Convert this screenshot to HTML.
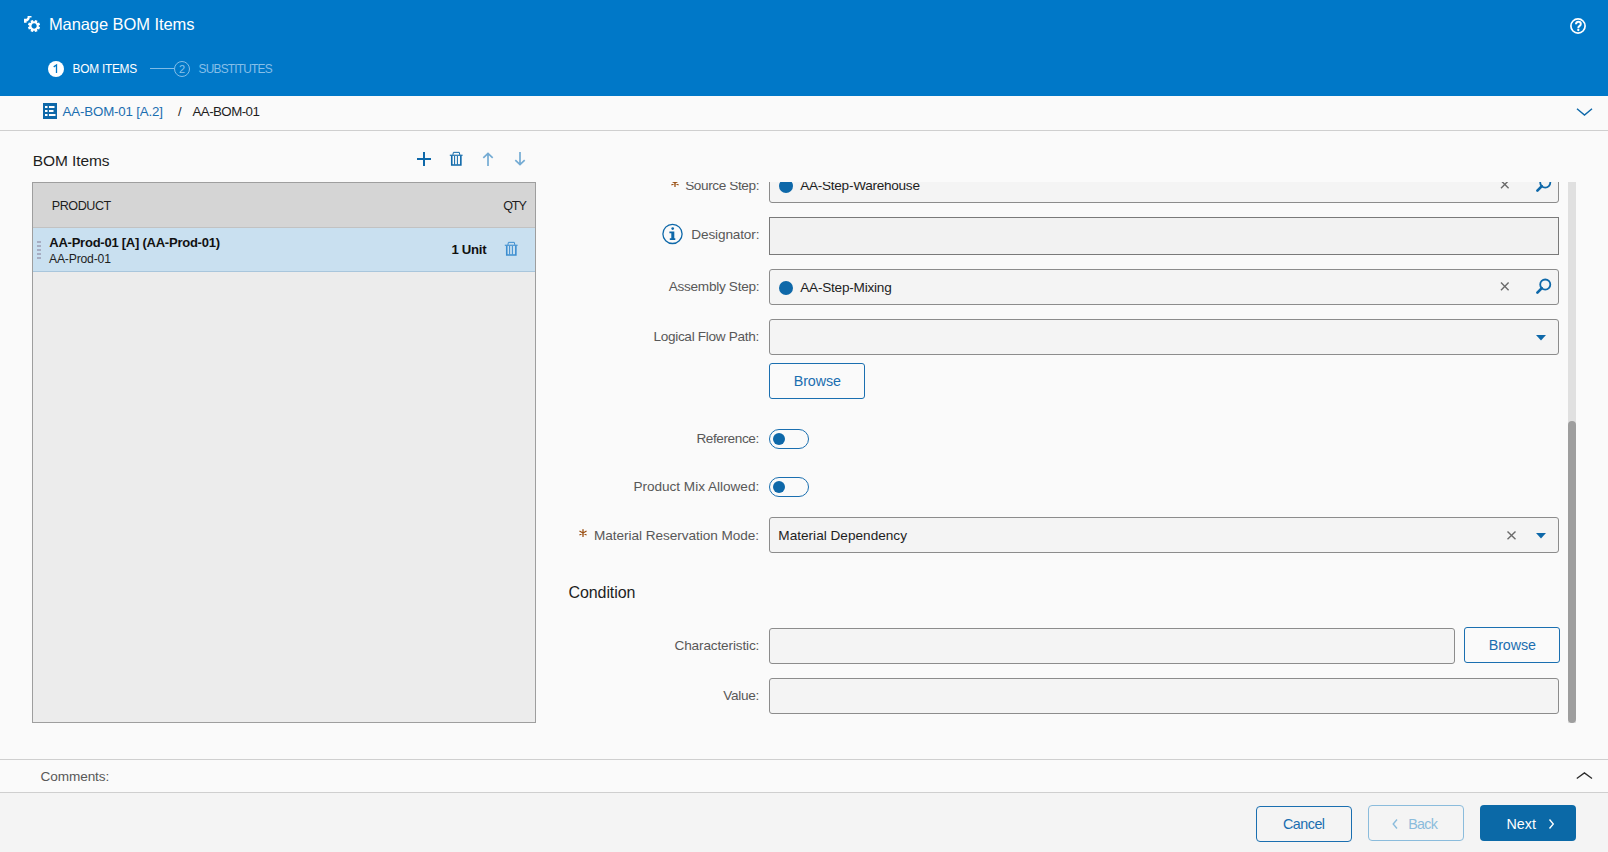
<!DOCTYPE html>
<html><head><meta charset="utf-8"><title>Manage BOM Items</title>
<style>
html,body{margin:0;padding:0;width:1608px;height:852px;overflow:hidden;background:#fafafa;font-family:"Liberation Sans", sans-serif;}
svg text{font-family:"Liberation Sans", sans-serif;}
</style></head><body>
<div style="position:absolute;left:0px;top:0px;width:1608px;height:96px;background:#0078c8"></div>
<div style="position:absolute;left:0px;top:96px;width:1608px;height:35px;background:#fafafa"></div>
<div style="position:absolute;left:0px;top:130px;width:1608px;height:1px;background:#cfcfcf"></div>
<div style="position:absolute;left:0px;top:131px;width:1608px;height:628px;background:#fafafa"></div>
<div style="position:absolute;left:0px;top:759px;width:1608px;height:1px;background:#cfcfcf"></div>
<div style="position:absolute;left:0px;top:760px;width:1608px;height:32px;background:#fafafa"></div>
<div style="position:absolute;left:0px;top:792px;width:1608px;height:1px;background:#cfcfcf"></div>
<div style="position:absolute;left:0px;top:793px;width:1608px;height:59px;background:#f4f4f4"></div>
<svg style="position:absolute;left:22px;top:14px;" width="20" height="20" viewBox="0 0 20 20"><g fill="#fff"><path d="M16.59 12.24 L18.09 13.19 L17.14 15.46 L15.42 15.08 L15.08 15.42 L15.46 17.14 L13.19 18.09 L12.24 16.59 L11.76 16.59 L10.81 18.09 L8.54 17.14 L8.92 15.42 L8.58 15.08 L6.86 15.46 L5.91 13.19 L7.41 12.24 L7.41 11.76 L5.91 10.81 L6.86 8.54 L8.58 8.92 L8.92 8.58 L8.54 6.86 L10.81 5.91 L11.76 7.41 L12.24 7.41 L13.19 5.91 L15.46 6.86 L15.08 8.58 L15.42 8.92 L17.14 8.54 L18.09 10.81 L16.59 11.76Z M12.1 9.35a2.65 2.65 0 1 0 0.01 0z" fill-rule="evenodd"/>
<path d="M2 4.8L4.6 4.8L5.6 3.4L5.6 2L9.5 2L9.5 3.6L7.6 3.6L7.6 5L5.8 7.3L4.6 7.3L4.6 8.7L2 8.7Z"/></g></svg>
<div style="position:absolute;left:48.9px;top:13.00px;font-size:16.5px;line-height:23px;color:#fff;font-weight:400;white-space:nowrap;letter-spacing:-0.08px;">Manage BOM Items</div>
<svg style="position:absolute;left:1569px;top:17px;" width="18" height="18" viewBox="0 0 18 18"><circle cx="9" cy="9" r="7.1" fill="none" stroke="#fff" stroke-width="1.7"/><path d="M7 7.3C7 5.6 8 4.8 9.4 4.8C10.9 4.8 11.8 5.7 11.8 7C11.8 8.3 10.9 8.9 10.1 9.4C9.5 9.8 9.3 10.3 9.3 11.2" fill="none" stroke="#fff" stroke-width="2"/><circle cx="9.3" cy="13" r="1.15" fill="#fff"/></svg>
<svg style="position:absolute;left:48px;top:61px;" width="16" height="16" viewBox="0 0 16 16"><circle cx="8" cy="8" r="8" fill="#fff"/><path d="M5.7 5.9L8.5 3.9V12" fill="none" stroke="#0078c8" stroke-width="1.3"/></svg>
<div style="position:absolute;left:72.6px;top:61.00px;font-size:11.9px;line-height:17px;color:#fff;font-weight:400;white-space:nowrap;letter-spacing:-0.275px;">BOM ITEMS</div>
<div style="position:absolute;left:150px;top:68px;width:24px;height:1px;background:#7fbbe6"></div>
<svg style="position:absolute;left:174px;top:61px;" width="16" height="16" viewBox="0 0 16 16"><circle cx="8" cy="8" r="7.5" fill="none" stroke="#84bee8" stroke-width="1"/><text x="8" y="12" text-anchor="middle" font-family="Liberation Sans" font-size="11" fill="#8ac2ea">2</text></svg>
<div style="position:absolute;left:198.6px;top:61.00px;font-size:11.9px;line-height:17px;color:#86bfe8;font-weight:400;white-space:nowrap;letter-spacing:-0.79px;">SUBSTITUTES</div>
<svg style="position:absolute;left:43px;top:103px;" width="14" height="16" viewBox="0 0 14 16"><rect width="14" height="16" fill="#0e68a9"/><g fill="#fff"><rect x="2" y="3" width="2.5" height="2"/><rect x="6" y="3" width="5.5" height="2"/><rect x="2" y="7" width="2.5" height="2"/><rect x="6" y="7" width="4.5" height="2"/><rect x="2" y="11" width="2.5" height="2"/><rect x="6" y="11" width="6.5" height="2"/></g></svg>
<div style="position:absolute;left:62.6px;top:102.00px;font-size:13.3px;line-height:19px;color:#1a6eb0;font-weight:400;white-space:nowrap;letter-spacing:-0.168px;">AA-BOM-01 [A.2]</div>
<div style="position:absolute;left:178px;top:103.00px;font-size:13px;line-height:18px;color:#1e1e1e;font-weight:400;white-space:nowrap;letter-spacing:0px;">/</div>
<div style="position:absolute;left:192.5px;top:102.00px;font-size:13.3px;line-height:19px;color:#1e1e1e;font-weight:400;white-space:nowrap;letter-spacing:-0.55px;">AA-BOM-01</div>
<svg style="position:absolute;left:1576px;top:106px;" width="17" height="11" viewBox="0 0 17 11"><path d="M1 2.8L8.5 9L16 2.8" fill="none" stroke="#0e68a9" stroke-width="1.45"/></svg>
<div style="position:absolute;left:32.8px;top:150.00px;font-size:15.5px;line-height:22px;color:#1e1e1e;font-weight:400;white-space:nowrap;letter-spacing:-0.088px;">BOM Items</div>
<svg style="position:absolute;left:416px;top:151px;" width="16" height="16" viewBox="0 0 16 16"><path d="M8 1v14M1 8h14" stroke="#0e68a9" stroke-width="2"/></svg>
<svg style="position:absolute;left:449px;top:151px;" width="14" height="16" viewBox="0 0 14 16"><g fill="none" stroke="#0e68a9"><path d="M0.8 4.25h12.8" stroke-width="1.1"/><path d="M3.9 3.9L4.4 1.35H10.3L10.8 3.9" stroke-width="1"/><path d="M2.75 4.6V14.05H11.85V4.6" stroke-width="1.6"/><path d="M5.6 5v8.5M8.4 5v8.5" stroke-width="1"/></g></svg>
<svg style="position:absolute;left:481px;top:151px;" width="14" height="16" viewBox="0 0 14 16"><g fill="none" stroke="#74abd3" stroke-width="1.7"><path d="M7 2.4v12.6M2.3 6.8L7 2.4l4.7 4.4"/></g></svg>
<svg style="position:absolute;left:513px;top:151px;" width="14" height="16" viewBox="0 0 14 16"><g fill="none" stroke="#74abd3" stroke-width="1.7"><path d="M7 1v12.6M2.3 9.2L7 13.6l4.7-4.4"/></g></svg>
<div style="position:absolute;left:32px;top:182px;width:504px;height:541px;box-sizing:border-box;border:1px solid #9e9e9e;background:#ececec"></div>
<div style="position:absolute;left:33px;top:183px;width:502px;height:44px;background:#d5d5d5"></div>
<div style="position:absolute;left:33px;top:227px;width:502px;height:1px;background:#c2c2c2"></div>
<div style="position:absolute;left:33px;top:228px;width:502px;height:43px;background:#c9e0f0"></div>
<div style="position:absolute;left:33px;top:271px;width:502px;height:1px;background:#a9c6dc"></div>
<div style="position:absolute;left:51.8px;top:197.00px;font-size:12.6px;line-height:18px;color:#1e1e1e;font-weight:400;white-space:nowrap;letter-spacing:-0.467px;">PRODUCT</div>
<div style="position:absolute;left:503.2px;top:197.00px;font-size:12.6px;line-height:18px;color:#1e1e1e;font-weight:400;white-space:nowrap;letter-spacing:-1.15px;">QTY</div>
<div style="position:absolute;left:37px;top:241px;width:4px;height:2px;background:#a7adc2"></div>
<div style="position:absolute;left:37px;top:245px;width:4px;height:2px;background:#a7adc2"></div>
<div style="position:absolute;left:37px;top:249px;width:4px;height:2px;background:#a7adc2"></div>
<div style="position:absolute;left:37px;top:253px;width:4px;height:2px;background:#a7adc2"></div>
<div style="position:absolute;left:37px;top:257px;width:4px;height:2px;background:#a7adc2"></div>
<div style="position:absolute;left:49.3px;top:234.00px;font-size:13px;line-height:18px;color:#111;font-weight:700;white-space:nowrap;letter-spacing:-0.24px;">AA-Prod-01 [A] (AA-Prod-01)</div>
<div style="position:absolute;left:49.0px;top:251.00px;font-size:12.2px;line-height:17px;color:#1e1e1e;font-weight:400;white-space:nowrap;letter-spacing:-0.194px;">AA-Prod-01</div>
<div style="position:absolute;left:451.4px;top:241.00px;font-size:13.2px;line-height:18px;color:#111;font-weight:700;white-space:nowrap;letter-spacing:-0.29px;">1 Unit</div>
<svg style="position:absolute;left:504px;top:241px;" width="14" height="16" viewBox="0 0 14 16"><g fill="none" stroke="#3d8ed0"><path d="M0.8 4.25h12.8" stroke-width="1.1"/><path d="M3.9 3.9L4.4 1.35H10.3L10.8 3.9" stroke-width="1"/><path d="M2.75 4.6V14.05H11.85V4.6" stroke-width="1.6"/><path d="M5.6 5v8.5M8.4 5v8.5" stroke-width="1"/></g></svg>
<div style="position:absolute;left:540px;top:182px;width:1030px;height:541px;overflow:hidden">
<div style="position:absolute;left:-540px;top:-182px;width:1608px;height:852px">
<div style="position:absolute;left:769px;top:167px;width:790px;height:36px;box-sizing:border-box;border:1px solid #8c8c8c;border-radius:3px;background:#f4f4f4"></div>
<div style="position:absolute;left:779px;top:179px;width:14px;height:14px;border-radius:50%;background:#0e68a9"></div>
<div style="position:absolute;left:800.2px;top:176.00px;font-size:13.6px;line-height:19px;color:#1e1e1e;font-weight:400;white-space:nowrap;letter-spacing:-0.275px;">AA-Step-Warehouse</div>
<svg style="position:absolute;left:1499px;top:179px;" width="12" height="12" viewBox="0 0 12 12"><path d="M2.00 1.60L9.60 9.20M9.60 1.60L2.00 9.20" stroke="#6b6b6b" stroke-width="1.4"/></svg>
<svg style="position:absolute;left:1535px;top:176px;" width="17" height="17" viewBox="0 0 17 17"><g fill="none" stroke="#0e68a9"><circle cx="10.25" cy="6.55" r="5.05" stroke-width="1.8"/><path d="M6.8 10.1L2.4 14.6" stroke-width="2.7" stroke-linecap="round"/></g></svg>
<div style="position:absolute;left:685.2px;top:176.00px;font-size:13.6px;line-height:19px;color:#585858;font-weight:400;white-space:nowrap;letter-spacing:-0.395px;">Source Step:</div>
<svg style="position:absolute;left:669.9px;top:178.3px;" width="10" height="10" viewBox="0 0 10 10"><g stroke="#9a4f12" stroke-width="1.3" stroke-linecap="round"><path d="M5 1.6v6.8M1.9 3.3l6.2 3.4M1.9 6.7l6.2-3.4"/></g></svg>
<div style="position:absolute;left:662px;top:223px;width:21px;height:21px;"></div>
<svg style="position:absolute;left:661px;top:222px;" width="23" height="23" viewBox="0 0 23 23"><circle cx="11.5" cy="11.9" r="9.6" fill="none" stroke="#0e68a9" stroke-width="1.3"/><circle cx="11.7" cy="6.6" r="1.35" fill="#0e68a9"/><path d="M8.4 9.6H13.3V16.2H14.3V17.9H8.8V16.2H10.3V11.3H8.4Z" fill="#0e68a9"/></svg>
<div style="position:absolute;left:691.3px;top:225.00px;font-size:13.6px;line-height:19px;color:#585858;font-weight:400;white-space:nowrap;letter-spacing:-0.135px;">Designator:</div>
<div style="position:absolute;left:769px;top:217px;width:790px;height:38px;box-sizing:border-box;border:1px solid #7a7a7a;border-radius:0px;background:#f2f2f2"></div>
<div style="position:absolute;left:668.8px;top:277.00px;font-size:13.6px;line-height:19px;color:#585858;font-weight:400;white-space:nowrap;letter-spacing:-0.292px;">Assembly Step:</div>
<div style="position:absolute;left:769px;top:269px;width:790px;height:36px;box-sizing:border-box;border:1px solid #8c8c8c;border-radius:3px;background:#f4f4f4"></div>
<div style="position:absolute;left:779px;top:281px;width:14px;height:14px;border-radius:50%;background:#0e68a9"></div>
<div style="position:absolute;left:800.2px;top:278.00px;font-size:13.6px;line-height:19px;color:#1e1e1e;font-weight:400;white-space:nowrap;letter-spacing:-0.223px;">AA-Step-Mixing</div>
<svg style="position:absolute;left:1499px;top:281px;" width="12" height="12" viewBox="0 0 12 12"><path d="M2.00 1.60L9.60 9.20M9.60 1.60L2.00 9.20" stroke="#6b6b6b" stroke-width="1.4"/></svg>
<svg style="position:absolute;left:1535px;top:277.5px;" width="17" height="17" viewBox="0 0 17 17"><g fill="none" stroke="#0e68a9"><circle cx="10.25" cy="6.55" r="5.05" stroke-width="1.8"/><path d="M6.8 10.1L2.4 14.6" stroke-width="2.7" stroke-linecap="round"/></g></svg>
<div style="position:absolute;left:653.4px;top:327.00px;font-size:13.6px;line-height:19px;color:#585858;font-weight:400;white-space:nowrap;letter-spacing:-0.303px;">Logical Flow Path:</div>
<div style="position:absolute;left:769px;top:319px;width:790px;height:36px;box-sizing:border-box;border:1px solid #8c8c8c;border-radius:3px;background:#f4f4f4"></div>
<svg style="position:absolute;left:1536px;top:335px;" width="10" height="6" viewBox="0 0 10 6"><path d="M0 0h10L5 5.5z" fill="#0e68a9"/></svg>
<div style="position:absolute;left:769px;top:363px;width:96px;height:36px;box-sizing:border-box;border:1px solid #1a6fb0;border-radius:3px;background:#fafafa"></div>
<div style="position:absolute;left:793.7px;top:371.00px;font-size:14.3px;line-height:20px;color:#1a6eb0;font-weight:400;white-space:nowrap;letter-spacing:-0.08px;">Browse</div>
<div style="position:absolute;left:696.4px;top:429.00px;font-size:13.6px;line-height:19px;color:#585858;font-weight:400;white-space:nowrap;letter-spacing:-0.406px;">Reference:</div>
<div style="position:absolute;left:769px;top:429px;width:40px;height:20px;box-sizing:border-box;border:1.3px solid #1a6fb0;border-radius:10px;background:#fafafa"></div>
<div style="position:absolute;left:773px;top:433px;width:12px;height:12px;border-radius:50%;background:#0e68a9"></div>
<div style="position:absolute;left:633.4px;top:477.00px;font-size:13.6px;line-height:19px;color:#585858;font-weight:400;white-space:nowrap;letter-spacing:-0.018px;">Product Mix Allowed:</div>
<div style="position:absolute;left:769px;top:477px;width:40px;height:20px;box-sizing:border-box;border:1.3px solid #1a6fb0;border-radius:10px;background:#fafafa"></div>
<div style="position:absolute;left:773px;top:481px;width:12px;height:12px;border-radius:50%;background:#0e68a9"></div>
<div style="position:absolute;left:769px;top:517px;width:790px;height:36px;box-sizing:border-box;border:1px solid #8c8c8c;border-radius:3px;background:#f4f4f4"></div>
<div style="position:absolute;left:594.0px;top:526.00px;font-size:13.6px;line-height:19px;color:#585858;font-weight:400;white-space:nowrap;letter-spacing:-0.044px;">Material Reservation Mode:</div>
<svg style="position:absolute;left:578.4px;top:528.2px;" width="10" height="10" viewBox="0 0 10 10"><g stroke="#9a4f12" stroke-width="1.3" stroke-linecap="round"><path d="M5 1.6v6.8M1.9 3.3l6.2 3.4M1.9 6.7l6.2-3.4"/></g></svg>
<div style="position:absolute;left:778.3px;top:526.00px;font-size:13.6px;line-height:19px;color:#1e1e1e;font-weight:400;white-space:nowrap;letter-spacing:0.011px;">Material Dependency</div>
<svg style="position:absolute;left:1506px;top:529px;" width="12" height="12" viewBox="0 0 12 12"><path d="M1.50 2.40L9.50 10.30M9.50 2.40L1.50 10.30" stroke="#6b6b6b" stroke-width="1.4"/></svg>
<svg style="position:absolute;left:1536px;top:533px;" width="10" height="6" viewBox="0 0 10 6"><path d="M0 0h10L5 5.5z" fill="#0e68a9"/></svg>
<div style="position:absolute;left:568.5px;top:582.00px;font-size:16px;line-height:22px;color:#1e1e1e;font-weight:400;white-space:nowrap;letter-spacing:-0.088px;">Condition</div>
<div style="position:absolute;left:674.5px;top:636.00px;font-size:13.6px;line-height:19px;color:#585858;font-weight:400;white-space:nowrap;letter-spacing:-0.143px;">Characteristic:</div>
<div style="position:absolute;left:769px;top:628px;width:686px;height:36px;box-sizing:border-box;border:1px solid #8c8c8c;border-radius:3px;background:#f4f4f4"></div>
<div style="position:absolute;left:1464px;top:627px;width:96px;height:36px;box-sizing:border-box;border:1px solid #1a6fb0;border-radius:3px;background:#fafafa"></div>
<div style="position:absolute;left:1488.7px;top:635.00px;font-size:14.3px;line-height:20px;color:#1a6eb0;font-weight:400;white-space:nowrap;letter-spacing:-0.08px;">Browse</div>
<div style="position:absolute;left:723.3px;top:686.00px;font-size:13.6px;line-height:19px;color:#585858;font-weight:400;white-space:nowrap;letter-spacing:-0.29px;">Value:</div>
<div style="position:absolute;left:769px;top:678px;width:790px;height:36px;box-sizing:border-box;border:1px solid #8c8c8c;border-radius:3px;background:#f4f4f4"></div>
</div></div>
<div style="position:absolute;left:1568px;top:182px;width:8px;height:541px;background:#e0e0e0"></div>
<div style="position:absolute;left:1568px;top:421px;width:8px;height:302px;background:#9e9e9e;border-radius:4px"></div>
<div style="position:absolute;left:40.6px;top:767.00px;font-size:13.6px;line-height:19px;color:#585858;font-weight:400;white-space:nowrap;letter-spacing:-0.106px;">Comments:</div>
<svg style="position:absolute;left:1576px;top:770px;" width="17" height="11" viewBox="0 0 17 11"><path d="M0.8 8.6L8.4 2.9L16 8.6" fill="none" stroke="#2b2b2b" stroke-width="1.25"/></svg>
<div style="position:absolute;left:1256px;top:806px;width:96px;height:36px;box-sizing:border-box;border:1.5px solid #1a6fb0;border-radius:4px;background:#f4f4f4"></div>
<div style="position:absolute;left:1283.0px;top:814.00px;font-size:14.3px;line-height:20px;color:#1a6eb0;font-weight:400;white-space:nowrap;letter-spacing:-0.5px;">Cancel</div>
<div style="position:absolute;left:1368px;top:805px;width:96px;height:36px;box-sizing:border-box;border:1px solid #8bbcdc;border-radius:4px;background:#f4f4f4"></div>
<svg style="position:absolute;left:1391px;top:817px;" width="8" height="14" viewBox="0 0 8 14"><path d="M6 2.5L2.2 7L6 11.5" fill="none" stroke="#8bbcdc" stroke-width="1.4"/></svg>
<div style="position:absolute;left:1408.3px;top:814.00px;font-size:14.3px;line-height:20px;color:#8bbcdc;font-weight:400;white-space:nowrap;letter-spacing:-0.717px;">Back</div>
<div style="position:absolute;left:1480px;top:805px;width:96px;height:36px;border-radius:4px;background:#0b69a7"></div>
<div style="position:absolute;left:1506.4px;top:814.00px;font-size:14.3px;line-height:20px;color:#fff;font-weight:400;white-space:nowrap;letter-spacing:0.067px;">Next</div>
<svg style="position:absolute;left:1547px;top:817px;" width="8" height="14" viewBox="0 0 8 14"><path d="M2.5 2.5L6.3 7L2.5 11.5" fill="none" stroke="#fff" stroke-width="1.35"/></svg>
</body></html>
